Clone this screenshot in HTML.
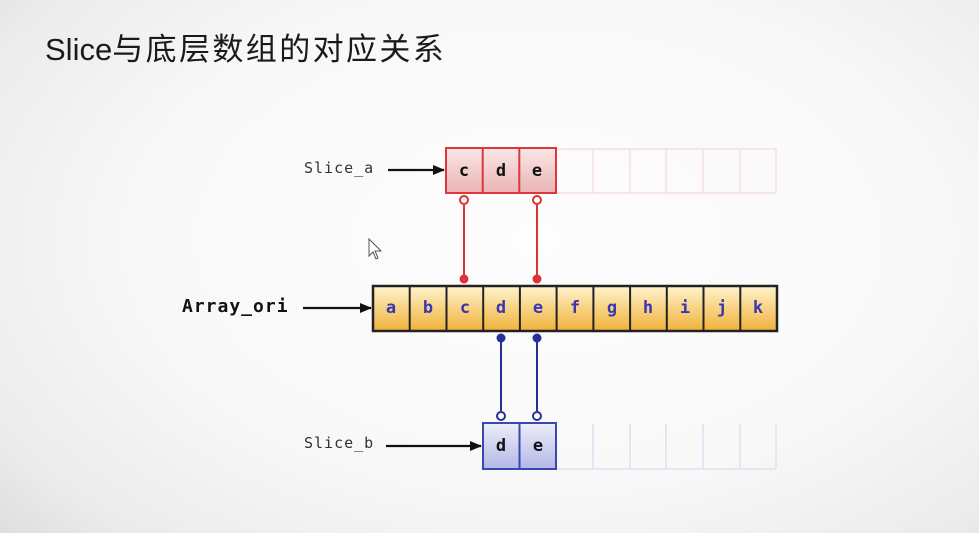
<!DOCTYPE html>
<html><head><meta charset="utf-8"><style>
html,body{margin:0;padding:0;}
body{width:979px;height:533px;overflow:hidden;position:relative;
background:radial-gradient(ellipse 75% 85% at 55% 45%, #fdfdfd 0%, #f8f8f8 55%, #ebebeb 85%, #dcdcdc 100%);}
.t{position:absolute;left:45px;top:24px;font:31px "Liberation Sans","Noto Sans CJK SC",sans-serif;color:#1a1a1a;letter-spacing:2.4px;white-space:nowrap}
.t span{letter-spacing:0}
</style></head><body>
<div class="t"><span>Slice</span>与底层数组的对应关系</div>
<svg width="979" height="533" style="position:absolute;left:0;top:0" font-family="'DejaVu Sans Mono','Liberation Mono',monospace">
<defs>
<linearGradient id="ya" x1="0" y1="0" x2="0" y2="1"><stop offset="0" stop-color="#fff3cc"/><stop offset="1" stop-color="#f0b23a"/></linearGradient>
<linearGradient id="ra" x1="0" y1="0" x2="0" y2="1"><stop offset="0" stop-color="#fbe6e6"/><stop offset="1" stop-color="#eab4b4"/></linearGradient>
<linearGradient id="ba" x1="0" y1="0" x2="0" y2="1"><stop offset="0" stop-color="#eceef9"/><stop offset="1" stop-color="#b3b8e6"/></linearGradient>
<marker id="ar" markerWidth="12" markerHeight="10" refX="11" refY="5" orient="auto" markerUnits="userSpaceOnUse"><path d="M0,0 L12,5 L0,10z" fill="#111"/></marker>
</defs>
<text x="304" y="173" font-size="15" fill="#333" letter-spacing="1">Slice_a</text>
<text x="182" y="312" font-size="18" font-weight="bold" fill="#111" letter-spacing="1">Array_ori</text>
<text x="304" y="448" font-size="15" fill="#333" letter-spacing="1">Slice_b</text>
<line x1="388" y1="170" x2="444" y2="170" stroke="#111" stroke-width="2.2" marker-end="url(#ar)"/>
<line x1="303" y1="308" x2="371" y2="308" stroke="#111" stroke-width="2.2" marker-end="url(#ar)"/>
<line x1="386" y1="446" x2="481" y2="446" stroke="#111" stroke-width="2.2" marker-end="url(#ar)"/>
<g stroke="#f2c8c8" stroke-width="1" fill="none" opacity="0.8">
<rect x="556" y="149" width="220" height="44"/>
<line x1="593" y1="149" x2="593" y2="193"/><line x1="630" y1="149" x2="630" y2="193"/><line x1="666" y1="149" x2="666" y2="193"/><line x1="703" y1="149" x2="703" y2="193"/><line x1="740" y1="149" x2="740" y2="193"/>
</g>
<g stroke="#dde0f2" stroke-width="1.5" fill="none">
<line x1="593" y1="424" x2="593" y2="469"/><line x1="630" y1="424" x2="630" y2="469"/><line x1="666" y1="424" x2="666" y2="469"/><line x1="703" y1="424" x2="703" y2="469"/><line x1="740" y1="424" x2="740" y2="469"/><line x1="776" y1="424" x2="776" y2="469"/>
<line x1="556" y1="469" x2="776" y2="469"/>
</g>
<rect x="446" y="148" width="110" height="45" fill="url(#ra)" stroke="#d9393b" stroke-width="2"/>
<line x1="482.7" y1="148" x2="482.7" y2="193" stroke="#d9393b" stroke-width="2"/>
<line x1="519.3" y1="148" x2="519.3" y2="193" stroke="#d9393b" stroke-width="2"/>
<g font-size="17" font-weight="bold" fill="#111" text-anchor="middle">
<text x="464" y="176">c</text><text x="501" y="176">d</text><text x="537" y="176">e</text></g>
<g stroke="#d33" stroke-width="2"><line x1="464" y1="205" x2="464" y2="278"/><line x1="537" y1="205" x2="537" y2="278"/></g>
<circle cx="464" cy="200" r="4" fill="#fff" stroke="#d33" stroke-width="2"/>
<circle cx="537" cy="200" r="4" fill="#fff" stroke="#d33" stroke-width="2"/>
<circle cx="464" cy="279" r="4.5" fill="#d33"/><circle cx="537" cy="279" r="4.5" fill="#d33"/>
<rect x="373" y="286" width="404" height="45" fill="url(#ya)" stroke="#222" stroke-width="2.5"/>
<g stroke="#222" stroke-width="2">
<line x1="409.7" y1="286" x2="409.7" y2="331"/><line x1="446.5" y1="286" x2="446.5" y2="331"/><line x1="483.2" y1="286" x2="483.2" y2="331"/><line x1="519.9" y1="286" x2="519.9" y2="331"/><line x1="556.6" y1="286" x2="556.6" y2="331"/><line x1="593.4" y1="286" x2="593.4" y2="331"/><line x1="630.1" y1="286" x2="630.1" y2="331"/><line x1="666.8" y1="286" x2="666.8" y2="331"/><line x1="703.5" y1="286" x2="703.5" y2="331"/><line x1="740.3" y1="286" x2="740.3" y2="331"/>
</g>
<g font-size="17" font-weight="bold" fill="#3a36b0" text-anchor="middle">
<text x="391" y="313">a</text><text x="428" y="313">b</text><text x="465" y="313">c</text><text x="501" y="313">d</text><text x="538" y="313">e</text><text x="575" y="313">f</text><text x="612" y="313">g</text><text x="648" y="313">h</text><text x="685" y="313">i</text><text x="722" y="313">j</text><text x="758" y="313">k</text></g>
<g stroke="#26309a" stroke-width="2"><line x1="501" y1="338" x2="501" y2="411"/><line x1="537" y1="338" x2="537" y2="411"/></g>
<circle cx="501" cy="338" r="4.5" fill="#26309a"/><circle cx="537" cy="338" r="4.5" fill="#26309a"/>
<circle cx="501" cy="416" r="4" fill="#fff" stroke="#26309a" stroke-width="2"/>
<circle cx="537" cy="416" r="4" fill="#fff" stroke="#26309a" stroke-width="2"/>
<rect x="483" y="423" width="73" height="46" fill="url(#ba)" stroke="#3b46b0" stroke-width="2"/>
<line x1="519.5" y1="423" x2="519.5" y2="469" stroke="#3b46b0" stroke-width="2"/>
<g font-size="17" font-weight="bold" fill="#111" text-anchor="middle">
<text x="501" y="451">d</text><text x="538" y="451">e</text></g>
<path d="M369,239 L369,256 L373,252 L376,259 L378,258 L375,251 L381,251 Z" fill="#fff" stroke="#555" stroke-width="1"/>
</svg>
</body></html>
